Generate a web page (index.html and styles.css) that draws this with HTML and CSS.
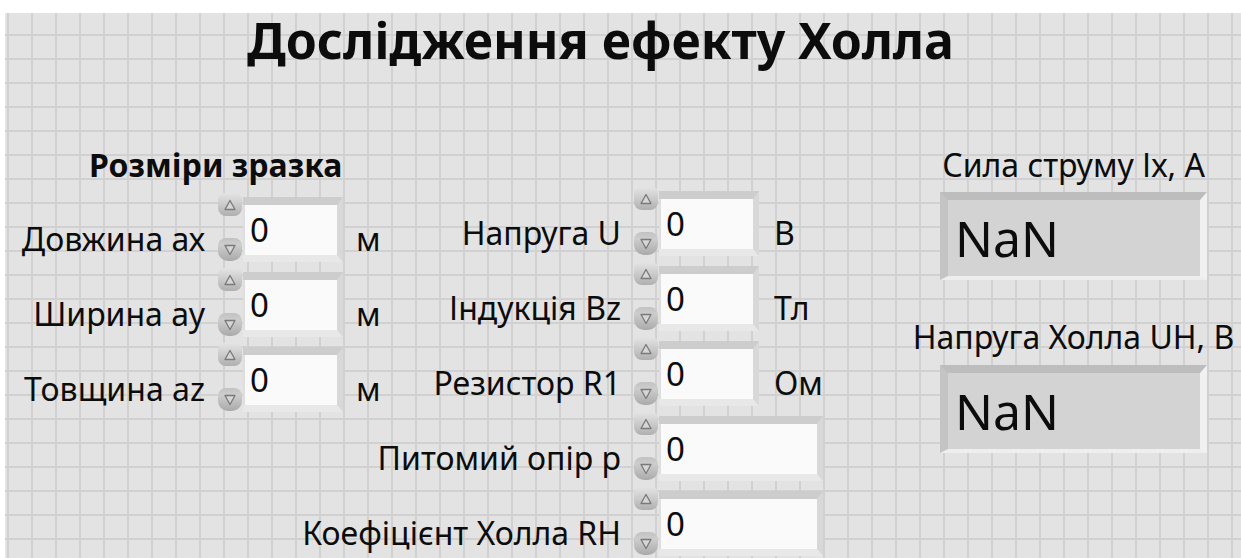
FILE: index.html
```html
<!DOCTYPE html>
<html lang="uk">
<head>
<meta charset="utf-8">
<title>Дослідження ефекту Холла</title>
<link rel="stylesheet" href="styles.css">
</head>
<body>
<div class="panel">
  <h1 class="title">Дослідження ефекту Холла</h1>
  <div class="board">
    <section class="col col-size">
      <h2 class="group-title">Розміри зразка</h2>
      <div class="ctl">
        <div class="lbl"><span>Довжина ах</span></div>
        <div class="spin">
          <span class="btn up"><svg viewBox="0 0 14 12"><path d="M2 10.5 L7 1.5 L12 10.5 Z"/></svg></span>
          <span class="btn down"><svg viewBox="0 0 14 12"><path d="M2 1.5 L7 10.5 L12 1.5 Z"/></svg></span>
        </div>
        <div class="frame"><div class="field">0</div></div>
        <span class="unit">м</span>
      </div>
      <div class="ctl">
        <div class="lbl"><span>Ширина ау</span></div>
        <div class="spin">
          <span class="btn up"><svg viewBox="0 0 14 12"><path d="M2 10.5 L7 1.5 L12 10.5 Z"/></svg></span>
          <span class="btn down"><svg viewBox="0 0 14 12"><path d="M2 1.5 L7 10.5 L12 1.5 Z"/></svg></span>
        </div>
        <div class="frame"><div class="field">0</div></div>
        <span class="unit">м</span>
      </div>
      <div class="ctl">
        <div class="lbl"><span>Товщина az</span></div>
        <div class="spin">
          <span class="btn up"><svg viewBox="0 0 14 12"><path d="M2 10.5 L7 1.5 L12 10.5 Z"/></svg></span>
          <span class="btn down"><svg viewBox="0 0 14 12"><path d="M2 1.5 L7 10.5 L12 1.5 Z"/></svg></span>
        </div>
        <div class="frame"><div class="field">0</div></div>
        <span class="unit">м</span>
      </div>
    </section>

    <section class="col col-params">
      <div class="ctl">
        <div class="lbl"><span>Напруга U</span></div>
        <div class="spin">
          <span class="btn up"><svg viewBox="0 0 14 12"><path d="M2 10.5 L7 1.5 L12 10.5 Z"/></svg></span>
          <span class="btn down"><svg viewBox="0 0 14 12"><path d="M2 1.5 L7 10.5 L12 1.5 Z"/></svg></span>
        </div>
        <div class="frame"><div class="field">0</div></div>
        <span class="unit">В</span>
      </div>
      <div class="ctl">
        <div class="lbl"><span>Індукція Bz</span></div>
        <div class="spin">
          <span class="btn up"><svg viewBox="0 0 14 12"><path d="M2 10.5 L7 1.5 L12 10.5 Z"/></svg></span>
          <span class="btn down"><svg viewBox="0 0 14 12"><path d="M2 1.5 L7 10.5 L12 1.5 Z"/></svg></span>
        </div>
        <div class="frame"><div class="field">0</div></div>
        <span class="unit">Тл</span>
      </div>
      <div class="ctl">
        <div class="lbl"><span>Резистор R1</span></div>
        <div class="spin">
          <span class="btn up"><svg viewBox="0 0 14 12"><path d="M2 10.5 L7 1.5 L12 10.5 Z"/></svg></span>
          <span class="btn down"><svg viewBox="0 0 14 12"><path d="M2 1.5 L7 10.5 L12 1.5 Z"/></svg></span>
        </div>
        <div class="frame"><div class="field">0</div></div>
        <span class="unit">Ом</span>
      </div>
      <div class="ctl">
        <div class="lbl"><span>Питомий опір р</span></div>
        <div class="spin">
          <span class="btn up"><svg viewBox="0 0 14 12"><path d="M2 10.5 L7 1.5 L12 10.5 Z"/></svg></span>
          <span class="btn down"><svg viewBox="0 0 14 12"><path d="M2 1.5 L7 10.5 L12 1.5 Z"/></svg></span>
        </div>
        <div class="frame"><div class="field wide">0</div></div>
      </div>
      <div class="ctl">
        <div class="lbl"><span>Коефіцієнт Холла RH</span></div>
        <div class="spin">
          <span class="btn up"><svg viewBox="0 0 14 12"><path d="M2 10.5 L7 1.5 L12 10.5 Z"/></svg></span>
          <span class="btn down"><svg viewBox="0 0 14 12"><path d="M2 1.5 L7 10.5 L12 1.5 Z"/></svg></span>
        </div>
        <div class="frame"><div class="field wide">0</div></div>
      </div>
    </section>

    <section class="col col-out">
      <div class="ind">
        <div class="ind-lbl"><span>Сила струму Іх, А</span></div>
        <div class="ind-box"><div class="ind-val">NaN</div></div>
      </div>
      <div class="ind second">
        <div class="ind-lbl"><span>Напруга Холла UН, В</span></div>
        <div class="ind-box"><div class="ind-val">NaN</div></div>
      </div>
    </section>
  </div>
</div>
</body>
</html>
```

FILE: styles.css
```css
html, body {
  margin: 0;
  padding: 0;
  background: #ffffff;
  overflow: hidden;
}

body {
  width: 1241px;
  height: 558px;
  font-family: "Noto Sans", "Open Sans", sans-serif;
  color: #0c0c0c;
}

/* front panel with the 24px alignment grid */
.panel {
  margin: 13px 0 0 5px;
  height: 545px;
  background-color: #e3e3e3;
  background-image:
    linear-gradient(90deg, transparent 2px, #d1d1d1 2px, #d1d1d1 4px, transparent 4px),
    linear-gradient(180deg, transparent 21px, #d1d1d1 21px, #d1d1d1 23px, transparent 23px);
  background-size: 24px 24px;
}

.title {
  margin: 0;
  padding-left: 242px;
  font-size: 50px;
  line-height: 54px;
  font-weight: 700;
  white-space: nowrap;
}

.board {
  display: flex;
}

.col {
  display: flex;
  flex-direction: column;
}

.col-size {
  width: 380px;
  padding-top: 80px;
}

.col-params {
  width: 455px;
  padding-top: 124px;
}

.col-out {
  padding-left: 100px;
  padding-top: 80px;
}

.group-title {
  margin: 0 0 14px;
  padding-left: 84px;
  font-size: 32px;
  line-height: 36px;
  font-weight: 700;
  white-space: nowrap;
}

/* numeric control: label, increment/decrement, entry field, unit */
.ctl {
  display: flex;
  height: 65px;
  margin-bottom: 10px;
  align-items: flex-start;
}

.ctl:last-child {
  margin-bottom: 0;
}

.lbl {
  display: flex;
  justify-content: flex-end;
  align-self: flex-end;
  margin-bottom: 5px;
  padding-right: 13px;
  font-size: 32px;
  line-height: 36px;
  white-space: nowrap;
}

.col-size .lbl { width: 200px; }
.col-params .lbl { width: 236px; }

.spin {
  width: 25px;
  height: 68px;
  margin-top: -4px;
  display: flex;
  flex-direction: column;
  justify-content: space-between;
  flex: none;
}

.btn {
  display: flex;
  align-items: center;
  justify-content: center;
  width: 24px;
  height: 23px;
  border-radius: 6px 6px 8px 8px;
  background: linear-gradient(#e4e4e4, #c6c6c6 60%, #afafaf);
}

.btn.down {
  border-radius: 8px 8px 10px 10px;
  background: linear-gradient(#c2c2c2, #cdcdcd 30%, #aaaaaa);
}

.btn svg {
  width: 14px;
  height: 12px;
}

.btn path {
  fill: #d6d6d6;
  stroke: #7a7a7a;
  stroke-width: 1.3;
  stroke-linejoin: round;
}

.frame {
  flex: none;
  border-top: 8px solid #cdcdcd;
  border-right: 6px solid #d8d8d8;
  border-bottom: 7px solid #e8e8e8;
  padding-left: 2px;
  background: #dedede;
}

.field {
  width: 87px;
  height: 50px;
  padding-left: 5px;
  background: #fafafa;
  font-size: 33px;
  line-height: 50px;
}

.field.wide {
  width: 151px;
}

.unit {
  align-self: flex-end;
  margin: 0 0 5px 13px;
  font-size: 32px;
  line-height: 36px;
}

.col-params .unit {
  margin-left: 15px;
}

/* numeric indicators */
.ind {
  width: 267px;
}

.ind.second {
  margin-top: 39px;
}

.ind-lbl {
  display: flex;
  justify-content: center;
  font-size: 32px;
  line-height: 36px;
  white-space: nowrap;
  margin-bottom: 9px;
}

.ind.second .ind-lbl {
  margin-bottom: 10px;
}

.ind-box {
  height: 76px;
  border-top: 8px solid #bdbdbd;
  border-left: 8px solid #c4c4c4;
  border-right: 7px solid #f1f1f1;
  border-bottom: 4px solid #eeeeee;
  background: #d3d3d3;
}

.ind-val {
  padding-left: 7px;
  font-size: 50px;
  line-height: 76px;
}
```
